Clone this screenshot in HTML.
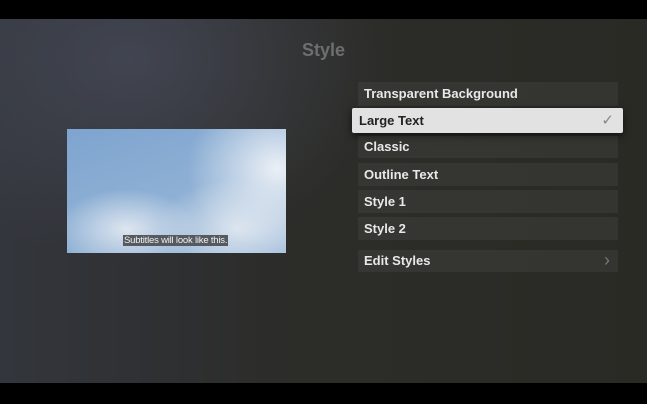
<!DOCTYPE html>
<html><head><style>
body{margin:0;width:647px;height:404px;background:#000;overflow:hidden;font-family:"Liberation Sans",sans-serif;}
#s{position:absolute;left:0;top:19px;width:647px;height:364px;
background:radial-gradient(ellipse 260px 200px at 130px 40px,rgba(70,74,88,0.8),rgba(0,0,0,0) 100%),
linear-gradient(90deg,#33363c 0%,#2f3134 20%,#2c2c29 45%,#2a2a25 100%);}
.t{position:absolute;left:0;width:647px;text-align:center;top:21px;color:#6e6e6e;font-weight:bold;font-size:18px;}
.r{position:absolute;left:358px;width:260px;background:rgba(255,255,255,0.05);color:#e8e8e8;font-size:13px;font-weight:bold;box-sizing:border-box;padding-left:6px;}
.sel{left:352px;width:271px;background:#e2e2e2;color:#222;border-radius:2px;box-shadow:0 3px 8px rgba(0,0,0,0.6);padding-left:7px;}
#img{position:absolute;left:67px;top:110px;width:219px;height:124px;
background:radial-gradient(ellipse 70px 40px at 60px 100px,rgba(230,235,242,0.9),rgba(230,235,242,0) 100%),
radial-gradient(ellipse 90px 80px at 210px 40px,rgba(240,243,247,0.95),rgba(240,243,247,0) 100%),
radial-gradient(ellipse 80px 50px at 170px 100px,rgba(225,232,240,0.9),rgba(225,232,240,0) 100%),
linear-gradient(160deg,#7ea4cf,#9dbbd9);}
#cap{position:absolute;left:56px;top:106px;background:#555a60;color:#f0f0f0;font-size:9.5px;padding:0 1px;letter-spacing:-0.2px;}
</style></head><body><div id="s">
<div class="t">Style</div>
<div id="img"><div id="cap">Subtitles will look like this.</div></div>
<div class="r" style="top:63px;height:24px;line-height:24px">Transparent Background</div>
<div class="r sel" style="top:89px;height:25px;line-height:25px">Large Text<span style="position:absolute;right:9px;color:#888;font-weight:normal;font-size:15px">✓</span></div>
<div class="r" style="top:117px;height:22px;line-height:22px">Classic</div>
<div class="r" style="top:144px;height:23px;line-height:23px">Outline Text</div>
<div class="r" style="top:171px;height:23px;line-height:23px">Style 1</div>
<div class="r" style="top:198px;height:23px;line-height:23px">Style 2</div>
<div class="r" style="top:231px;height:22px;line-height:22px">Edit Styles<span style="position:absolute;right:8px;color:#777;font-weight:normal;font-size:18px;line-height:20px">›</span></div>
</div></body></html>
